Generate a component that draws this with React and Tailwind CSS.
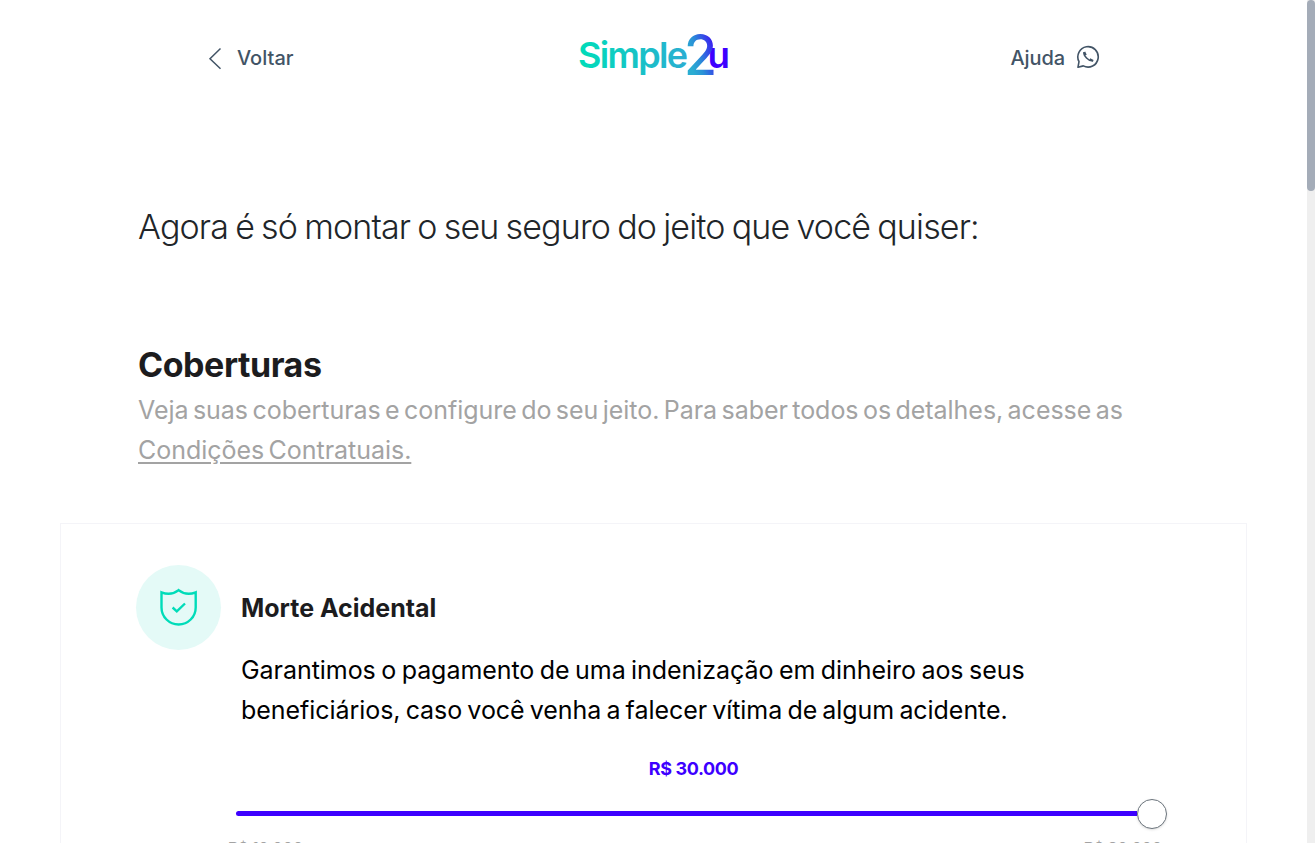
function Logo() {
  return (
    <svg className="mt-[29px] h-12 w-[154px] overflow-visible" viewBox="0 0 154 48" role="img" aria-label="Simple2u">
      <defs>
        <linearGradient id="word" gradientUnits="userSpaceOnUse" x1="2" y1="0" x2="112" y2="0">
          <stop offset="0" stopColor="#00dcb9" />
          <stop offset="1" stopColor="#2badd2" />
        </linearGradient>
        <linearGradient id="two" gradientUnits="userSpaceOnUse" x1="112" y1="30" x2="138" y2="22">
          <stop offset="0" stopColor="#2badd2" />
          <stop offset="0.35" stopColor="#2a91d7" />
          <stop offset="1" stopColor="#3a22f0" />
        </linearGradient>
      </defs>
      <g fontFamily="Inter, sans-serif">
        <text x="1" y="38.5" fontSize="36" fontWeight="600" textLength="110" fill="url(#word)">Simple</text>
        <text x="130.5" y="38.5" fontSize="36" fontWeight="600" textLength="22.5" lengthAdjust="spacingAndGlyphs" fill="#3d00ff">u</text>
        <text x="107" y="46" fontSize="56" fontWeight="450" textLength="33" lengthAdjust="spacingAndGlyphs" fill="url(#two)">2</text>
      </g>
    </svg>
  );
}

function WhatsIcon() {
  return (
    <svg className="mt-[45px] ml-[11px] h-6 w-6" viewBox="0 0 24 24" fill="none" stroke="#425466" strokeWidth="1.6">
      <path d="M2 22.2 3 16.6A10.2 10.2 0 1 1 7.3 20.9Z" strokeLinejoin="round" />
      <path d="M8 7.2C7.3 10.5 12.5 16.6 17 15.7" strokeWidth="1.6" />
      <path d="m8.3 7 1.5 3.2M13.8 14.2l3.4 1.6" strokeWidth="2" />
    </svg>
  );
}

export default function App() {
  return (
    <div className="flex h-[843px] w-full overflow-hidden bg-white font-['Inter',sans-serif]">
      <div className="h-full w-[1307px] shrink-0 overflow-hidden">
        <header className="flex h-[120px] pr-[207px] pl-[208px] text-[#425466]">
          <div className="flex w-[369px]">
            <svg className="mt-[47px] h-[23px] w-[14px]" viewBox="0 0 14 23" fill="none" stroke="currentColor" strokeWidth="1.5">
              <path d="M12.5 1.5 2 11.7l10.5 10" />
            </svg>
            <span className="mt-[43px] ml-[15px] text-[20px] leading-[30px] font-medium">Voltar</span>
          </div>
          <Logo />
          <div className="ml-auto flex">
            <span className="mt-[43px] text-[20px] leading-[30px] font-medium tracking-[-0.1px]">Ajuda</span>
            <WhatsIcon />
          </div>
        </header>
        <main>
          <section className="pl-[138px] whitespace-nowrap">
            <h1 className="mt-[82px] h-[50px] text-[34px] leading-[50px] font-light tracking-[-0.85px] text-[#212529] [word-spacing:-1.6px]"><span>Agora é só montar o seu seguro do jeito que você quiser:</span></h1>
            <h2 className="mt-[88px] h-[50px] text-[34px] leading-[50px] font-bold tracking-[-0.45px] text-[#1c1c1e]"><span>Coberturas</span></h2>
            <p className="text-[25px] leading-[40px] tracking-[-0.03px] text-[#a3a3a3] [word-spacing:-2.6px]">
              <span>Veja suas coberturas e configure do seu jeito. Para saber todos os detalhes, acesse as</span><br />
              <span className="underline decoration-[1.5px] underline-offset-[3px]">Condições Contratuais.</span>
            </p>
          </section>
          <section className="mt-[53px] ml-[60px] h-[500px] w-[1187px] border border-[#f4f4f8] pt-[41px] pl-[75px] whitespace-nowrap">
            <div className="flex items-center">
              <div className="flex h-[85px] w-[85px] items-center justify-center rounded-full bg-[#e4faf7]">
                <svg className="-mt-px h-[38px] w-[38px]" viewBox="0 0 38 38" fill="none" stroke="#00dcb9" strokeWidth="2.4">
                  <path d="M1.5 4.3Q11.1 8 18.6 2.1Q26.1 8 35.7 4.3V19.5A17.1 17 0 0 1 1.5 19.5Z" />
                  <path d="m12.6 19.5 4.2 3.8 8.2-7.8" />
                </svg>
              </div>
              <h3 className="ml-[20px] h-[36px] text-[25px] leading-[36px] font-bold text-[#1c1c1e]">Morte Acidental</h3>
            </div>
            <p className="ml-[105px] text-[25px] leading-[40px] tracking-[-0.05px] text-black">
              <span className="[word-spacing:-1.5px]">Garantimos o pagamento de uma indenização em dinheiro aos seus</span><br />
              <span className="[word-spacing:-1.8px]">beneficiários, caso você venha a falecer vítima de algum acidente.</span>
            </p>
            <div className="ml-[100px] w-[931px]">
              <div className="mt-[26px] pr-[16px] text-center text-[18px] leading-[26px] font-bold tracking-[-0.4px] text-[#3d00ff]">R$ 30.000</div>
              <div className="mt-[17px] flex h-[30px] items-center">
                <div className="-mt-px h-[5px] w-[901px] rounded-l-full bg-[#3d00ff]" />
                <div className="h-[30px] w-[30px] rounded-full border border-[#6c757d] bg-white shadow-sm" />
              </div>
              <div className="mt-[6px] -ml-[8px] flex justify-between pr-[5px] text-[16px] leading-[26px] font-semibold tracking-[-0.35px] text-[#a3a3a3]">
                <span>R$ 10.000</span><span>R$ 30.000</span>
              </div>
            </div>
          </section>
        </main>
      </div>
      <div className="h-full w-2 shrink-0 bg-[#efefef]">
        <div className="h-[191px] w-2 rounded-full bg-[#a4acb8]" />
      </div>
    </div>
  );
}
